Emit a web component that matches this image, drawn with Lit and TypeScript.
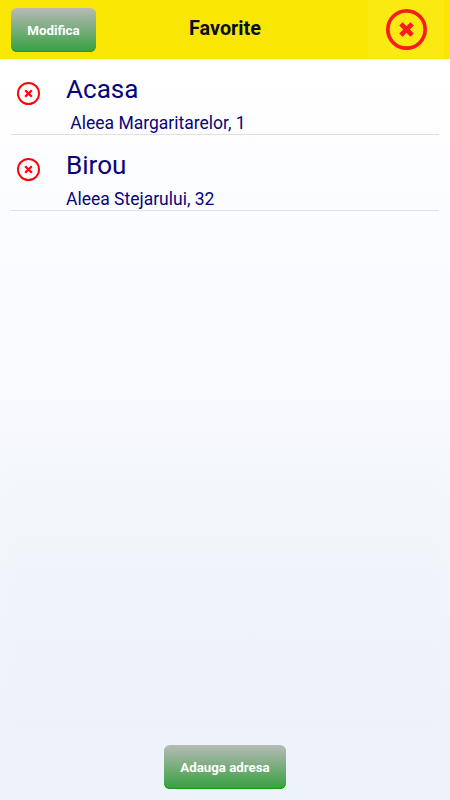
import { LitElement, html, css, svg } from "lit";
import { customElement, property } from "lit/decorators.js";

@customElement("close-icon")
class CloseIcon extends LitElement {
  @property({ type: Number }) ring = 2;
  @property({ type: Number }) bar = 2.6;
  @property({ type: Number }) arm = 3.2;
  @property({ type: Number }) size = 22;

  static styles = css`
    :host { display: block; }
    svg { display: block; width: 100%; height: 100%; fill: none; stroke: currentColor; }
  `;

  render() {
    const c = this.size / 2;
    const a = this.arm;
    return html`<svg viewBox="0 0 ${this.size} ${this.size}">
      ${svg`<circle cx=${c} cy=${c} r=${c - this.ring / 2} stroke-width=${this.ring}></circle>
      <path stroke-width=${this.bar} d="M${c - a} ${c - a}L${c + a} ${c + a}M${c + a} ${c - a}L${c - a} ${c + a}"></path>`}
    </svg>`;
  }
}

interface Favorite {
  name: string;
  address: string;
}

@customElement("app-root")
class AppRoot extends LitElement {
  private favorites: Favorite[] = [
    { name: "Acasa", address: " Aleea Margaritarelor, 1" },
    { name: "Birou", address: "Aleea Stejarului, 32" },
  ];

  static styles = css`
    :host {
      display: flex;
      flex-direction: column;
      height: 800px;
      box-sizing: border-box;
      overflow: hidden;
      font-family: Roboto, "Liberation Sans", sans-serif;
      background: linear-gradient(#ffffff 59px, #fbfcff 220px, #f8fafd 390px, #f0f5fb 580px, #edf2fb 800px);
    }
    header {
      display: grid;
      grid-template-columns: 1fr auto 1fr;
      height: 59px;
      flex: none;
      background: #f9e602;
    }
    h1 {
      margin: 0;
      font-size: 19.8px;
      line-height: 57px;
      font-weight: 700;
      color: #0b0d1c;
    }
    button {
      display: block;
      box-sizing: border-box;
      padding: 0;
      border: 0;
      border-radius: 6px;
      height: 44px;
      font-family: inherit;
      font-size: 13.3px;
      font-weight: 700;
      color: #fff;
      background: linear-gradient(#b8bab8, #36a03f);
    }
    .edit { width: 85px; margin: 8px 0 0 11px; box-shadow: inset 0 -1px #149f38; }
    .close {
      justify-self: end;
      box-sizing: border-box;
      width: 76px;
      height: 58px;
      margin-right: 6px;
      padding: 9px 0 0 18px;
      background: #faea12;
      color: #fb1a20;
    }
    .close close-icon { width: 41px; height: 41px; }
    ul {
      flex: 1;
      margin: 0 11px;
      padding: 0;
      list-style: none;
      background: linear-gradient(rgba(255, 255, 255, 0.1), rgba(255, 255, 255, 0) 50%, rgba(236, 240, 249, 0.3));
    }
    li {
      display: flex;
      box-sizing: border-box;
      height: 76px;
      border-bottom: 1px solid #dfe0e3;
      color: #08047a;
    }
    .remove { width: 23px; height: 23px; margin: 23px 26px 0 6px; color: #fa0509; }
    .name { font-size: 26.1px; line-height: 32px; margin-top: 14px; }
    .address { font-size: 17.5px; line-height: 22px; margin-top: 7px; white-space: pre; }
    footer { display: flex; justify-content: center; height: 66px; flex: none; }
    .add { width: 122px; margin-top: 11px; box-shadow: inset 0 -1px #0d9c12; }
  `;

  render() {
    return html`
      <header>
        <button class="edit">Modifica</button>
        <h1>Favorite</h1>
        <div class="close"><close-icon .size=${41} .ring=${3.7} .bar=${4.8} .arm=${5.6}></close-icon></div>
      </header>
      <ul>
        ${this.favorites.map(
          (f) => html`<li>
            <close-icon class="remove" .size=${23} .ring=${1.9} .bar=${2.3} .arm=${3.3}></close-icon>
            <div>
              <div class="name">${f.name}</div>
              <div class="address">${f.address}</div>
            </div>
          </li>`
        )}
      </ul>
      <footer><button class="add">Adauga adresa</button></footer>
    `;
  }
}
